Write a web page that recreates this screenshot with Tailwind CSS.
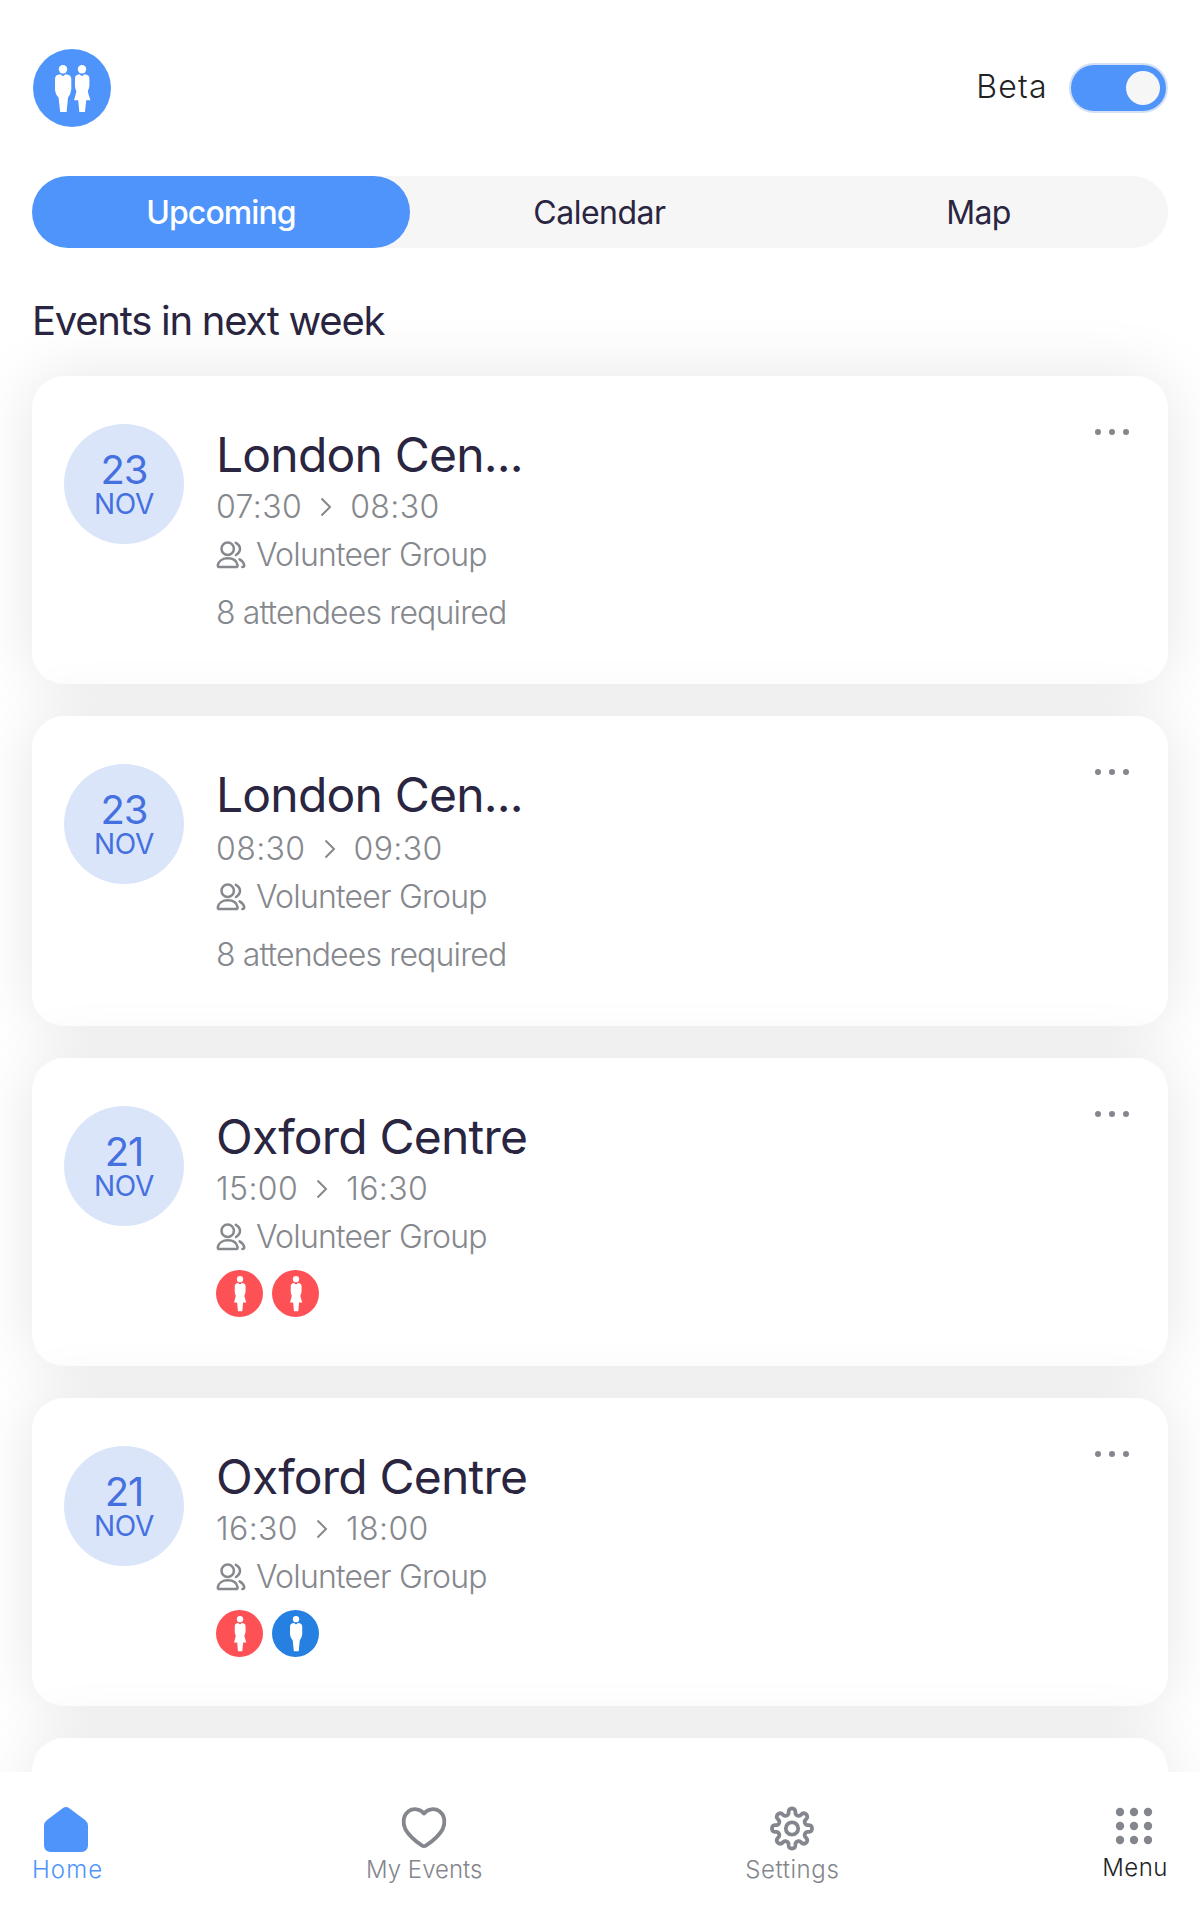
<!DOCTYPE html>
<html lang="en">
<head>
  <meta charset="UTF-8">
  <meta name="viewport" content="width=device-width, initial-scale=1.0">
  <title>Upcoming Events</title>
  <script src="https://cdn.jsdelivr.net/npm/@tailwindcss/browser@4"></script>
</head>
<body class="bg-white h-[1920px] overflow-hidden flex flex-col font-['Inter','Liberation_Sans',sans-serif] text-[#2a2540]">

  <!-- shared icons -->
  <svg class="hidden">
    <symbol id="man" viewBox="0 0 18 48">
      <circle cx="9" cy="4.2" r="4.2"/>
      <path d="M6.6 9.3 Q9 12.6 11.4 9.3 Q17.3 9.6 17.3 14 V24 Q17 29 14 32.5 L12.6 47 H6.2 L4.6 32.5 Q1 29 1 24 V14 Q1 9.6 6.6 9.3Z"/>
    </symbol>
    <symbol id="woman" viewBox="0 0 18 48">
      <circle cx="9" cy="4.2" r="4.2"/>
      <path d="M6.6 9.3 Q9 12.6 11.4 9.3 Q16.4 9.6 16.4 13.5 V21 Q16 24 14.8 26 Q15.2 28.5 17.4 35.3 H13.2 L12 47 H6.3 L5.2 35.3 H1 Q3 28.5 3.4 26 Q2 24 2 21 V13.5 Q2 9.6 6.6 9.3Z"/>
    </symbol>
    <symbol id="group" viewBox="0 0 30 28" fill="none" stroke="currentColor" stroke-width="2.5" stroke-linecap="round" stroke-linejoin="round">
      <circle cx="11.7" cy="7.8" r="6.2"/>
      <path d="M1.8 24.2 C2.6 20 6.5 17.3 11.8 17.3 C17 17.3 20.8 20 21.6 24.2 Q21.7 26 20 26 H3.4 Q1.6 26 1.8 24.2Z"/>
      <path d="M19.8 1.8 Q24 4 24 7.8 Q24 11.6 20 14"/>
      <path d="M23.6 18.3 Q27.6 20.5 28.2 24.2 Q28.3 26 26.4 26"/>
    </symbol>
    <symbol id="arrow" viewBox="0 0 12 20" fill="none" stroke="currentColor" stroke-width="2">
      <path d="M1.5 1.5 L10 10 L1.5 18.5"/>
    </symbol>
    <symbol id="dots" viewBox="0 0 34 6">
      <circle cx="3" cy="3" r="3"/><circle cx="17" cy="3" r="3"/><circle cx="31" cy="3" r="3"/>
    </symbol>
  </svg>

  <header class="h-[176px] shrink-0 px-8 flex items-center justify-between">
    <div class="size-[78px] ml-px rounded-full bg-[#4e94fb] flex items-center justify-center gap-px text-white">
      <svg class="w-[18px] h-12 mt-px fill-current"><use href="#man"/></svg>
      <svg class="w-[18px] h-12 mt-px fill-current"><use href="#woman"/></svg>
    </div>
    <div class="flex items-center gap-[21px]">
      <span class="-mt-0.5 text-[32px] tracking-[1.3px] font-light text-[#222]">Beta</span>
      <div class="w-[99px] h-[50px] rounded-full bg-[#4e94fb] border-2 border-[#d3e0f5] flex items-center justify-end pr-[6px]">
        <div class="size-[34px] rounded-full bg-[#f6f6f6]"></div>
      </div>
    </div>
  </header>

  <nav class="mx-8 h-[72px] shrink-0 rounded-full bg-[#f6f6f6] flex text-[32px]">
    <button class="w-[378px] pt-0.5 rounded-full bg-[#4e94fb] text-white font-medium tracking-[-0.9px]">Upcoming</button>
    <button class="w-[379px] pt-0.5 tracking-[-0.5px]">Calendar</button>
    <button class="w-[379px] pt-0.5 tracking-[-0.7px]">Map</button>
  </nav>

  <main class="flex-1 min-h-0 overflow-hidden px-8">
    <h2 class="h-32 pt-[43px] text-[40px] leading-[60px] tracking-[-1.25px]">Events in next week</h2>
    <div id="events" class="flex flex-col gap-8"></div>
  </main>

  <footer class="relative h-[148px] shrink-0 bg-white px-8 flex justify-between text-2xl font-light text-[#83868c]">
    <a class="flex flex-col items-center pt-[34px] text-[#4e94fb]">
      <svg class="w-[46px] h-[48px] -ml-1" viewBox="0 0 46 48" fill="currentColor"><path d="M20 2 Q23 -0.2 26 2 L42 14 Q45 16.3 45 20 V39 Q45 46 38 46 H8 Q1 46 1 39 V20 Q1 16.3 4 14Z"/></svg>
      <span class="leading-8 tracking-[1.1px]">Home</span>
    </a>
    <a class="flex flex-col items-center pt-[34px]">
      <svg class="w-[46px] h-[48px]" viewBox="0 0 46 48" fill="none" stroke="currentColor" stroke-width="3.8" stroke-linejoin="round"><path d="M23 7.500 C19 2.500 12 2 7.500 5.300 C2 9.500 1.300 17 4.500 23.500 C8 29.500 15 35.500 20.500 39.200 Q23 41 25.500 39.200 C31 35.500 38 29.500 41.500 23.500 C44.700 17 44 9.500 38.500 5.300 C34 2 27 2.500 23 7.500Z"/></svg>
      <span class="leading-8">My Events</span>
    </a>
    <a class="flex flex-col items-center pt-[34px]">
      <svg class="w-[46px] h-[48px]" viewBox="0 0 46 48" fill="none" stroke="currentColor" stroke-width="3.8" stroke-linejoin="round"><path id="gear-path"/><circle cx="23" cy="22.500" r="6.200"/></svg>
      <span class="leading-8 tracking-[0.6px]">Settings</span>
    </a>
    <a class="flex flex-col items-center pt-[32px] text-[#222]">
      <svg class="w-[46px] h-[48px] text-[#83868c]" viewBox="0 0 46 48" fill="currentColor">
        <circle cx="8" cy="8" r="4.2"/><circle cx="22" cy="8" r="4.2"/><circle cx="36" cy="8" r="4.2"/>
        <circle cx="8" cy="22" r="4.2"/><circle cx="22" cy="22" r="4.2"/><circle cx="36" cy="22" r="4.2"/>
        <circle cx="8" cy="36" r="4.2"/><circle cx="22" cy="36" r="4.2"/><circle cx="36" cy="36" r="4.2"/>
      </svg>
      <span class="leading-8 tracking-[0.5px]">Menu</span>
    </a>
  </footer>

  <script>
    const events = [
      { day: 23, name: 'London Cen...', start: '07:30', end: '08:30', required: 8 },
      { day: 23, name: 'London Cen...', start: '08:30', end: '09:30', required: 8, extra: 'pb-0.5' },
      { day: 21, name: 'Oxford Centre', start: '15:00', end: '16:30', people: ['woman', 'woman'] },
      { day: 21, name: 'Oxford Centre', start: '16:30', end: '18:00', people: ['woman', 'man'] },
    ];
    const colours = { woman: 'bg-[#fd5155]', man: 'bg-[#2680e2]' };

    document.getElementById('events').innerHTML = events.map((e) => `
      <article class="${e.extra ? 'h-[310px]' : 'h-[308px]'} shrink-0 rounded-[32px] bg-white shadow-[0_0_64px_rgba(0,0,0,0.1)] p-8 flex">
        <div class="mt-4 size-[120px] shrink-0 rounded-full bg-[#dbe5fa] text-[#4470e0] flex flex-col items-center justify-center pt-[3px]">
          <span class="text-[40px] leading-9 tracking-[-1px]">${e.day}</span>
          <span class="text-[28px] leading-8 tracking-[-0.3px]">NOV</span>
        </div>
        <div class="ml-8 mt-[15px] text-[#85888d] text-[32px] font-light">
          <h3 class="text-[48px] leading-[64px] font-normal tracking-[-0.8px] text-[#2a2540] ${e.extra || ''}">${e.name}</h3>
          <div class="flex items-center leading-[40px] tracking-[0.4px]">
            <span>${e.start}</span>
            <svg class="w-3 h-5 mx-[18px]"><use href="#arrow"/></svg>
            <span>${e.end}</span>
          </div>
          <div class="mt-2 flex items-center gap-[10px] leading-[40px] tracking-[-0.8px]">
            <svg class="w-[30px] h-7"><use href="#group"/></svg>
            <span>Volunteer Group</span>
          </div>
          ${e.required ? `<p class="mt-[18px] leading-10 tracking-[-0.85px]">${e.required} attendees required</p>` : `
          <div class="mt-[13px] flex gap-[9px]">
            ${e.people.map((p) => `<span class="size-[47px] rounded-full ${colours[p]} text-white flex items-center justify-center"><svg class="w-[14px] h-9 fill-current"><use href="#${p}"/></svg></span>`).join('')}
          </div>`}
        </div>
        <svg class="ml-auto mt-[21px] mr-[7px] w-[34px] h-[6px] shrink-0 fill-[#83868c]"><use href="#dots"/></svg>
      </article>`).join('') + `
      <article class="h-[308px] shrink-0 rounded-[32px] bg-white shadow-[0_0_64px_rgba(0,0,0,0.1)]"></article>`;

    // eight rounded teeth
    let d = '';
    for (let i = 0; i <= 320; i++) {
      const t = i / 320 * Math.PI * 2;
      const r = 17 + 3 * Math.cos(8 * t);
      const a = t + 0.04 * Math.sin(16 * t);
      d += (i ? 'L' : 'M') + (23 + r * Math.sin(a)).toFixed(2) + ' ' + (22.5 - r * Math.cos(a)).toFixed(2);
    }
    document.getElementById('gear-path').setAttribute('d', d + 'Z');
  </script>
</body>
</html>
